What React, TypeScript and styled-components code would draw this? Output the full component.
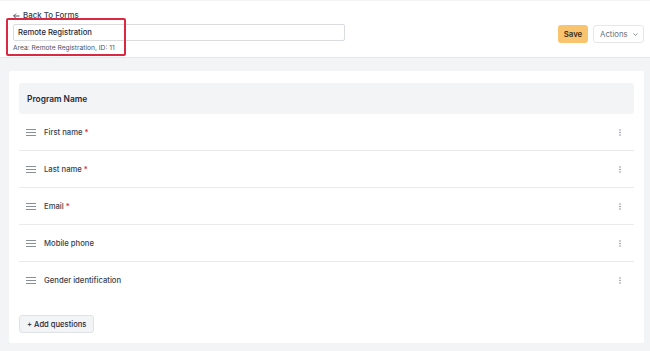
import React from "react";
import styled, { createGlobalStyle } from "styled-components";

const Global = createGlobalStyle`
  html, body { margin: 0; padding: 0; background: #f3f4f6; }
  body { font-family: Inter, "Noto Sans", sans-serif; color: #374151; -webkit-font-smoothing: antialiased; }
  * { box-sizing: border-box; }
`;

const Page = styled.div`
  width: 650px;
  height: 351px;
  background: #f3f4f6;
  padding-top: 1px;
  overflow: hidden;
`;

const Header = styled.header`
  position: relative;
  background: #fff;
  height: 57px;
  border-bottom: 1px solid #e5e7eb;
  display: flex;
  justify-content: space-between;
  align-items: flex-start;
  padding: 9px 6px 0 13px;
`;

const TitleBlock = styled.div`
  display: flex;
  flex-direction: column;
`;

const BackLink = styled.a`
  font-size: 7.9px;
  font-weight: 500;
  line-height: 11px;
  color: #374151;
  text-decoration: none;
  display: flex;
  align-items: center;
  gap: 3px;
`;

const TitleInput = styled.div`
  margin-top: 3px;
  width: 332px;
  height: 17px;
  border: 1px solid #d8dbe0;
  border-radius: 2px;
  padding: 0 4px;
  font-size: 7.7px;
  font-weight: 500;
  line-height: 15px;
  color: #1f2937;
`;

const Meta = styled.div`
  margin-top: 3px;
  font-size: 6.7px;
  line-height: 9px;
  color: #4b5563;
`;

const Highlight = styled.div`
  position: absolute;
  left: 6px;
  top: 17px;
  width: 120px;
  height: 38px;
  border: 2px solid #dc2943;
  border-radius: 2px;
  pointer-events: none;
`;

const Actions = styled.div`
  display: flex;
  gap: 5px;
  margin-top: 15px;
`;

const SaveButton = styled.button`
  height: 18px;
  width: 30px;
  padding: 0;
  border: none;
  border-radius: 3px;
  background: #f9c46f;
  color: #3a2e17;
  font-family: inherit;
  font-size: 7.8px;
  font-weight: 600;
`;

const MenuButton = styled.button`
  height: 18px;
  width: 51px;
  padding: 0 0 0 6px;
  border: 1px solid #e5e7eb;
  border-radius: 3px;
  background: #fff;
  color: #6b7280;
  font-family: inherit;
  font-size: 7.8px;
  display: flex;
  align-items: center;
  gap: 5px;
`;

const Main = styled.main`
  padding: 13px 6px 0 9px;
`;

const Card = styled.section`
  background: #fff;
  border-radius: 2px;
  padding: 12px 10px 10px 10px;
`;

const SectionHead = styled.div`
  height: 31px;
  background: #f3f4f6;
  border-radius: 3px;
  display: flex;
  align-items: center;
  padding-left: 8px;
  font-size: 8.4px;
  font-weight: 600;
  color: #1f2937;
`;

const Row = styled.div<{ $last?: boolean }>`
  height: 37px;
  display: flex;
  align-items: center;
  padding: 0 13px 0 7px;
  border-bottom: ${(p) => (p.$last ? "none" : "1px solid #e8eaed")};
`;

const Handle = styled.span`
  width: 10px;
  display: flex;
  color: #7c828c;
`;

const Label = styled.span`
  margin-left: 8px;
  font-size: 7.7px;
  font-weight: 500;
  color: #374151;
  flex: 1;
`;

const Required = styled.span`
  color: #dc2626;
  margin-left: 2px;
`;

const Kebab = styled.span`
  display: flex;
  color: #8a9099;
`;

const AddButton = styled.button`
  margin-top: 16px;
  height: 18px;
  padding: 0 7px;
  border: 1px solid #dfe2e6;
  border-radius: 3px;
  background: #f3f4f6;
  color: #1f2937;
  font-family: inherit;
  font-size: 7.6px;
  font-weight: 500;
  display: flex;
  align-items: center;
  gap: 3px;
`;

const HamburgerIcon = () => (
  <svg width="10" height="7" viewBox="0 0 10 7" fill="none" stroke="currentColor" strokeWidth="0.9">
    <path d="M0 0.5h10M0 3.5h10M0 6.5h10" />
  </svg>
);

const KebabIcon = () => (
  <svg width="2" height="7" viewBox="0 0 2 7" fill="currentColor">
    <circle cx="1" cy="1" r="0.8" />
    <circle cx="1" cy="3.5" r="0.8" />
    <circle cx="1" cy="6" r="0.8" />
  </svg>
);

const fields = [
  { label: "First name", required: true },
  { label: "Last name", required: true },
  { label: "Email", required: true },
  { label: "Mobile phone", required: false },
  { label: "Gender identification", required: false },
];

export default function App() {
  return (
    <Page>
      <Global />
      <Header>
        <TitleBlock>
          <BackLink href="#">
            <svg width="7" height="6" viewBox="0 0 7 6" fill="none" stroke="currentColor" strokeWidth="0.9">
              <path d="M6.5 3H0.8M3 0.6L0.6 3 3 5.4" />
            </svg>
            Back To Forms
          </BackLink>
          <TitleInput>Remote Registration</TitleInput>
          <Meta>Area: Remote Registration, ID: 11</Meta>
        </TitleBlock>
        <Actions>
          <SaveButton>Save</SaveButton>
          <MenuButton>
            Actions
            <svg width="5" height="3" viewBox="0 0 5 3" fill="none" stroke="currentColor" strokeWidth="0.8">
              <path d="M0.5 0.5L2.5 2.5 4.5 0.5" />
            </svg>
          </MenuButton>
        </Actions>
        <Highlight />
      </Header>
      <Main>
        <Card>
          <SectionHead>Program Name</SectionHead>
          {fields.map((f, i) => (
            <Row key={f.label} $last={i === fields.length - 1}>
              <Handle>
                <HamburgerIcon />
              </Handle>
              <Label>
                {f.label}
                {f.required && <Required>*</Required>}
              </Label>
              <Kebab>
                <KebabIcon />
              </Kebab>
            </Row>
          ))}
          <AddButton>+ Add questions</AddButton>
        </Card>
      </Main>
    </Page>
  );
}
